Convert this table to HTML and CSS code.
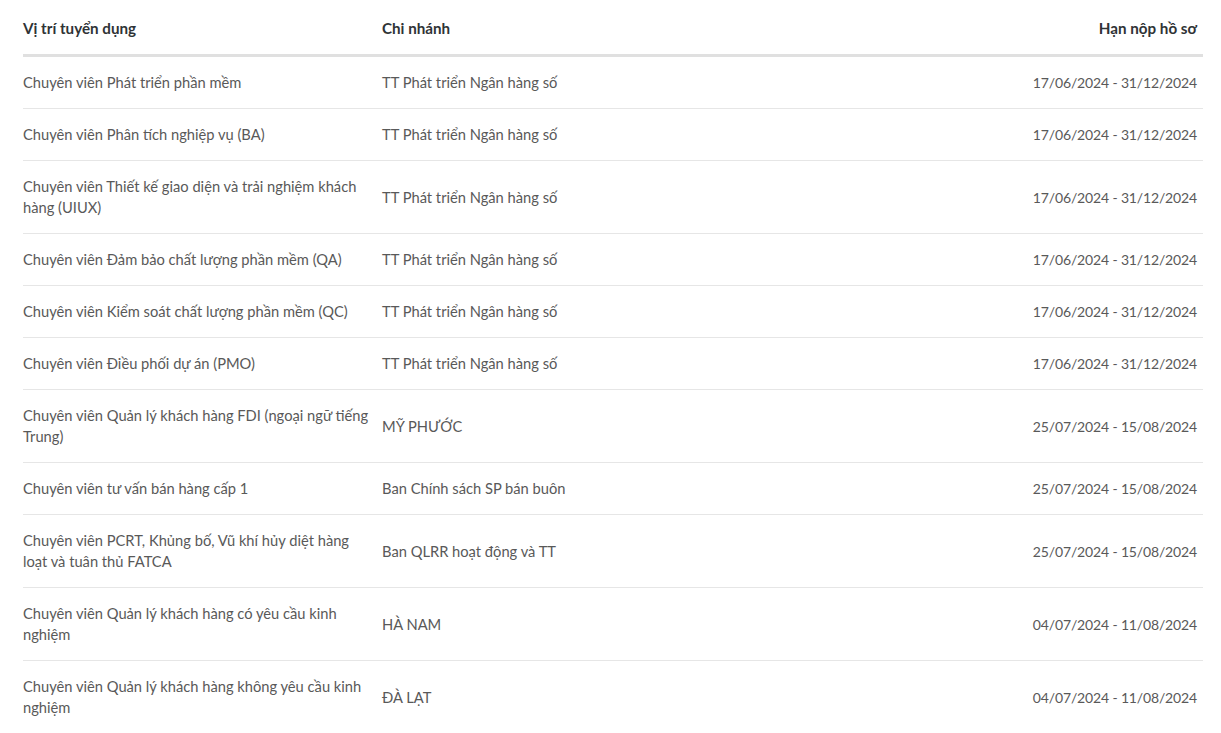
FILE: index.html
```html
<!DOCTYPE html>
<html lang="vi">
<head>
<meta charset="utf-8">
<link rel="stylesheet" href="styles.css">
</head>
<body>
<div class="wrap">
<table class="jobs">
<thead>
<tr><th class="c1">Vị trí tuyển dụng</th><th class="c2">Chi nhánh</th><th class="c3">Hạn nộp hồ sơ</th></tr>
</thead>
<tbody>
<tr><td class="c1">Chuyên viên Phát triển phần mềm</td><td class="c2">TT Phát triển Ngân hàng số</td><td class="c3">17/06/2024 - 31/12/2024</td></tr>
<tr><td class="c1">Chuyên viên Phân tích nghiệp vụ (BA)</td><td class="c2">TT Phát triển Ngân hàng số</td><td class="c3">17/06/2024 - 31/12/2024</td></tr>
<tr><td class="c1">Chuyên viên Thiết kế giao diện và trải nghiệm khách hàng (UIUX)</td><td class="c2">TT Phát triển Ngân hàng số</td><td class="c3">17/06/2024 - 31/12/2024</td></tr>
<tr><td class="c1">Chuyên viên Đảm bảo chất lượng phần mềm (QA)</td><td class="c2">TT Phát triển Ngân hàng số</td><td class="c3">17/06/2024 - 31/12/2024</td></tr>
<tr><td class="c1">Chuyên viên Kiểm soát chất lượng phần mềm (QC)</td><td class="c2">TT Phát triển Ngân hàng số</td><td class="c3">17/06/2024 - 31/12/2024</td></tr>
<tr><td class="c1">Chuyên viên Điều phối dự án (PMO)</td><td class="c2">TT Phát triển Ngân hàng số</td><td class="c3">17/06/2024 - 31/12/2024</td></tr>
<tr><td class="c1">Chuyên viên Quản lý khách hàng FDI (ngoại ngữ tiếng Trung)</td><td class="c2">MỸ PHƯỚC</td><td class="c3">25/07/2024 - 15/08/2024</td></tr>
<tr><td class="c1">Chuyên viên tư vấn bán hàng cấp 1</td><td class="c2">Ban Chính sách SP bán buôn</td><td class="c3">25/07/2024 - 15/08/2024</td></tr>
<tr><td class="c1">Chuyên viên PCRT, Khủng bố, Vũ khí hủy diệt hàng loạt và tuân thủ FATCA</td><td class="c2">Ban QLRR hoạt động và TT</td><td class="c3">25/07/2024 - 15/08/2024</td></tr>
<tr><td class="c1">Chuyên viên Quản lý khách hàng có yêu cầu kinh nghiệm</td><td class="c2">HÀ NAM</td><td class="c3">04/07/2024 - 11/08/2024</td></tr>
<tr><td class="c1">Chuyên viên Quản lý khách hàng không yêu cầu kinh nghiệm</td><td class="c2">ĐÀ LẠT</td><td class="c3">04/07/2024 - 11/08/2024</td></tr>
</tbody>
</table>
</div>
</body>
</html>
```
FILE: styles.css
```css
html, body {
  margin: 0;
  padding: 0;
  background: #fff;
}
body {
  font-family: "Lato", "Noto Sans", sans-serif;
  font-size: 14.7px;
  line-height: 21px;
  color: #595959;
}
.wrap {
  padding: 0 18px 0 23px;
}
.jobs {
  width: 100%;
  border-collapse: collapse;
  table-layout: fixed;
}
.jobs th {
  font-size: 15.2px;
  font-weight: 700;
  color: #2f3336;
  text-align: left;
  padding: 18px 0 15px;
  border-bottom: 3px solid #e0e0e0;
}
.jobs td {
  padding: 15px 0;
  border-bottom: 1px solid #e6e6e6;
  vertical-align: middle;
}
.jobs tbody tr:last-child td {
  border-bottom: none;
}
.jobs .c1 {
  width: 350px;
  padding-right: 9px;
}
.jobs .c2 {
  width: auto;
}
.jobs .c3 {
  width: 240px;
  text-align: right;
  padding-right: 6px;
}
.jobs td.c3 {
  font-size: 14px;
  letter-spacing: -0.15px;
}
```
